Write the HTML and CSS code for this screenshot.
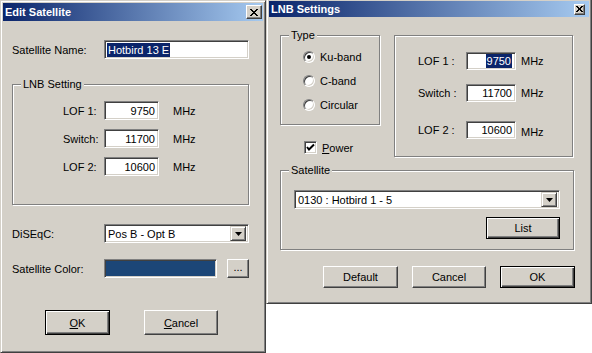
FILE: index.html
```html
<!DOCTYPE html>
<html lang="en">
<head>
    <meta charset="UTF-8">
    <title>Edit Satellite / LNB Settings</title>
    <link rel="stylesheet" href="styles.css">
</head>
<body>
    <div class="win win-edit">
        <div class="titlebar">
            <span class="title">Edit Satellite</span>
            <span class="close"><svg width="8" height="7" viewBox="0 0 8 7"><path d="M0 0L7 7M1 0L8 7M7 0L0 7M8 0L1 7" stroke="#000" stroke-width="1"/></svg></span>
        </div>
        <div class="body">
            <div class="row name-row">
                <span class="lbl">Satellite Name:</span>
                <div class="field name-field"><span class="hl">Hotbird 13 E</span></div>
            </div>

            <div class="group lnb-group">
                <span class="legend">LNB Setting</span>
                <div class="lrow"><span class="lbl-s">LOF 1:</span><div class="field num">9750</div><span class="unit">MHz</span></div>
                <div class="lrow"><span class="lbl-s">Switch:</span><div class="field num">11700</div><span class="unit">MHz</span></div>
                <div class="lrow"><span class="lbl-s">LOF 2:</span><div class="field num">10600</div><span class="unit">MHz</span></div>
            </div>

            <div class="row diseqc-row">
                <span class="lbl">DiSEqC:</span>
                <div class="field combo diseqc-combo">
                    <span class="combo-text">Pos B - Opt B</span>
                    <span class="drop"><svg width="7" height="4" viewBox="0 0 7 4"><path d="M0 0H7L3.5 4Z" fill="#000"/></svg></span>
                </div>
            </div>

            <div class="row color-row">
                <span class="lbl">Satellite Color:</span>
                <div class="field swatch"></div>
                <button class="btn dots">...</button>
            </div>

            <div class="edit-buttons">
                <button class="btn default ok-l"><u>O</u>K</button>
                <button class="btn cancel-l"><u>C</u>ancel</button>
            </div>
        </div>
    </div>

    <div class="win win-lnb">
        <div class="titlebar small">
            <span class="title">LNB Settings</span>
            <span class="close close-s"><svg width="7" height="6" viewBox="0 0 7 6"><path d="M0 0L6 6M1 0L7 6M6 0L0 6M7 0L1 6" stroke="#000" stroke-width="1"/></svg></span>
        </div>
        <div class="body lnb-body">
            <div class="top-row">
                <div class="type-col">
                    <div class="group type-group">
                        <span class="legend">Type</span>
                        <div class="radio-row"><span class="radio on"></span>Ku-band</div>
                        <div class="radio-row"><span class="radio"></span>C-band</div>
                        <div class="radio-row"><span class="radio"></span>Circular</div>
                    </div>
                    <div class="check-row">
                        <span class="check"><svg width="9" height="9" viewBox="0 0 9 9"><path d="M1 4L3 6.5L8 1.5" stroke="#000" stroke-width="2" fill="none"/></svg></span>
                        <span><u>P</u>ower</span>
                    </div>
                </div>
                <div class="group lof-group">
                    <div class="frow f1"><span class="lbl-r">LOF 1 :</span><div class="field num-s"><span class="hl">9750</span></div><span class="unit-s">MHz</span></div>
                    <div class="frow f2"><span class="lbl-r">Switch :</span><div class="field num-s">11700</div><span class="unit-s">MHz</span></div>
                    <div class="frow f3"><span class="lbl-r">LOF 2 :</span><div class="field num-s">10600</div><span class="unit-s low">MHz</span></div>
                </div>
            </div>

            <div class="group sat-group">
                <span class="legend">Satellite</span>
                <div class="field combo sat-combo">
                    <span class="combo-text">0130 : Hotbird 1 - 5</span>
                    <span class="drop"><svg width="7" height="4" viewBox="0 0 7 4"><path d="M0 0H7L3.5 4Z" fill="#000"/></svg></span>
                </div>
                <div class="list-wrap"><button class="btn default list-btn">List</button></div>
            </div>

            <div class="lnb-buttons">
                <button class="btn wide-btn">Default</button>
                <button class="btn cancel-r">Cancel</button>
                <button class="btn default wide-btn">OK</button>
            </div>
        </div>
    </div>
</body>
</html>
```

FILE: styles.css
```css
/* Global */
html, body {
    margin: 0;
    padding: 0;
}
body {
    width: 592px;
    height: 353px;
    overflow: hidden;
    background: #ffffff;
    display: flex;
    align-items: flex-start;
    font-family: "Liberation Sans", Arial, sans-serif;
    font-size: 11px;
    color: #000;
}
button {
    font-family: inherit;
    font-size: 11px;
    color: #000;
    padding: 0;
    margin: 0;
}

/* Window frame */
.win {
    box-sizing: border-box;
    background: #d4d0c8;
    border-top: 1px solid #d4d0c8;
    border-left: 1px solid #d4d0c8;
    border-right: 1px solid #404040;
    border-bottom: 1px solid #404040;
    box-shadow: inset 1px 1px 0 #fff, inset -1px -1px 0 #808080;
    padding: 2px;
    display: flex;
    flex-direction: column;
    flex: none;
}
.win-edit {
    width: 266px;
    height: 353px;
}
.win-lnb {
    width: 326px;
    height: 306px;
    margin-top: -2px;
}

.titlebar {
    height: 18px;
    display: flex;
    align-items: center;
    justify-content: space-between;
    background: linear-gradient(to right, #0a246a, #a6caf0);
    color: #fff;
    font-weight: bold;
    padding-left: 2px;
    flex: none;
}
.titlebar.small {
    height: 16px;
}
.close {
    width: 16px;
    height: 14px;
    box-sizing: border-box;
    margin-right: 1px;
    background: #d4d0c8;
    border-top: 1px solid #fff;
    border-left: 1px solid #fff;
    border-right: 1px solid #404040;
    border-bottom: 1px solid #404040;
    box-shadow: inset -1px -1px 0 #808080;
    display: flex;
    align-items: center;
    justify-content: center;
}
.close-s {
    width: 11px;
    height: 11px;
    margin-right: 4px;
}

/* Controls */
.field {
    box-sizing: border-box;
    background: #fff;
    border-top: 1px solid #808080;
    border-left: 1px solid #808080;
    border-right: 1px solid #fff;
    border-bottom: 1px solid #fff;
    box-shadow: inset 1px 1px 0 #404040, inset -1px -1px 0 #d4d0c8;
    height: 19px;
    display: flex;
    align-items: center;
    padding: 0 3px;
    flex: none;
}
.hl {
    background: #0a246a;
    color: #fff;
    line-height: 14px;
    padding: 0 1px;
}
.btn {
    box-sizing: border-box;
    background: #d4d0c8;
    border-top: 1px solid #fff;
    border-left: 1px solid #fff;
    border-right: 1px solid #404040;
    border-bottom: 1px solid #404040;
    box-shadow: inset -1px -1px 0 #808080;
    display: flex;
    align-items: center;
    justify-content: center;
    flex: none;
}
.btn.default {
    border: 1px solid #000;
    box-shadow: inset 1px 1px 0 #fff, inset -1px -1px 0 #404040, inset -2px -2px 0 #808080;
}
.combo {
    justify-content: space-between;
    padding: 0 2px 0 3px;
}
.drop {
    width: 16px;
    height: 15px;
    box-sizing: border-box;
    background: #d4d0c8;
    border-top: 1px solid #d4d0c8;
    border-left: 1px solid #d4d0c8;
    border-right: 1px solid #404040;
    border-bottom: 1px solid #404040;
    box-shadow: inset 1px 1px 0 #fff, inset -1px -1px 0 #808080;
    display: flex;
    align-items: center;
    justify-content: center;
}

/* Group boxes */
.group {
    position: relative;
    box-sizing: border-box;
    border: 1px solid #808080;
    box-shadow: 1px 1px 0 #fff, inset 1px 1px 0 #fff;
    flex: none;
}
.legend {
    position: absolute;
    top: -7px;
    left: 8px;
    padding: 0 2px;
    background: #d4d0c8;
    line-height: 13px;
}

/* Edit Satellite */
.body {
    display: flex;
    flex-direction: column;
    padding-left: 9px;
}
.row {
    display: flex;
    align-items: center;
}
.lbl {
    width: 92px;
    flex: none;
}
.name-row {
    margin-top: 19px;
}
.name-field {
    width: 145px;
    padding-left: 2px;
}
.lnb-group {
    margin-top: 25px;
    width: 237px;
    height: 121px;
    padding: 16px 0 0 50px;
}
.lrow {
    display: flex;
    align-items: center;
    margin-bottom: 9px;
}
.lbl-s {
    width: 41px;
}
.num {
    width: 55px;
    justify-content: flex-end;
}
.unit {
    margin-left: 14px;
}
.diseqc-row {
    margin-top: 19px;
}
.diseqc-combo {
    width: 145px;
}
.color-row {
    margin-top: 16px;
}
.swatch {
    width: 113px;
    background: #1c4677;
}
.dots {
    width: 22px;
    height: 19px;
    margin-left: 10px;
    padding-bottom: 3px;
}
.edit-buttons {
    display: flex;
    margin-top: 32px;
    padding-left: 33px;
}
.ok-l {
    width: 65px;
    height: 25px;
}
.cancel-l {
    width: 74px;
    height: 25px;
    margin-left: 34px;
}

/* LNB Settings */
.lnb-body {
    padding-left: 11px;
}
.top-row {
    display: flex;
    margin-top: 18px;
}
.type-group {
    width: 100px;
    height: 90px;
    padding: 9px 0 0 22px;
}
.radio-row {
    display: flex;
    align-items: center;
    height: 24px;
}
.radio {
    width: 12px;
    height: 12px;
    box-sizing: border-box;
    border-radius: 50%;
    background: #fff;
    border-top: 1px solid #808080;
    border-left: 1px solid #808080;
    border-right: 1px solid #fff;
    border-bottom: 1px solid #fff;
    box-shadow: inset 1px 1px 0 #404040, inset -1px -1px 0 #d4d0c8;
    margin-right: 5px;
    position: relative;
}
.radio.on::after {
    content: "";
    position: absolute;
    left: 3px;
    top: 3px;
    width: 4px;
    height: 4px;
    border-radius: 50%;
    background: #000;
}
.check-row {
    display: flex;
    align-items: center;
    margin-top: 16px;
    margin-left: 24px;
}
.check {
    width: 13px;
    height: 13px;
    box-sizing: border-box;
    background: #fff;
    border-top: 1px solid #808080;
    border-left: 1px solid #808080;
    border-right: 1px solid #fff;
    border-bottom: 1px solid #fff;
    box-shadow: inset 1px 1px 0 #404040, inset -1px -1px 0 #d4d0c8;
    display: flex;
    align-items: center;
    justify-content: center;
    margin-right: 5px;
}
.lof-group {
    margin-left: 14px;
    width: 179px;
    height: 122px;
    padding: 16px 0 0 23px;
}
.frow {
    display: flex;
    align-items: center;
}
.f2 {
    margin-top: 14px;
}
.f3 {
    margin-top: 19px;
}
.lbl-r {
    width: 48px;
}
.num-s {
    width: 50px;
    height: 18px;
    justify-content: flex-end;
}
.unit-s {
    margin-left: 5px;
}
.unit-s.low {
    margin-top: 4px;
}
.sat-group {
    margin-top: 13px;
    width: 294px;
    height: 80px;
    padding: 19px 13px 0 13px;
}
.sat-combo {
    width: 266px;
    height: 19px;
}
.list-wrap {
    display: flex;
    justify-content: flex-end;
    margin-top: 8px;
    padding-right: 0;
}
.list-btn {
    width: 74px;
    height: 22px;
}
.lnb-buttons {
    display: flex;
    justify-content: flex-end;
    margin-top: 16px;
    padding-right: 14px;
}
.wide-btn {
    width: 75px;
    height: 22px;
}
.cancel-r {
    width: 74px;
    height: 22px;
    margin: 0 14px;
}
```
